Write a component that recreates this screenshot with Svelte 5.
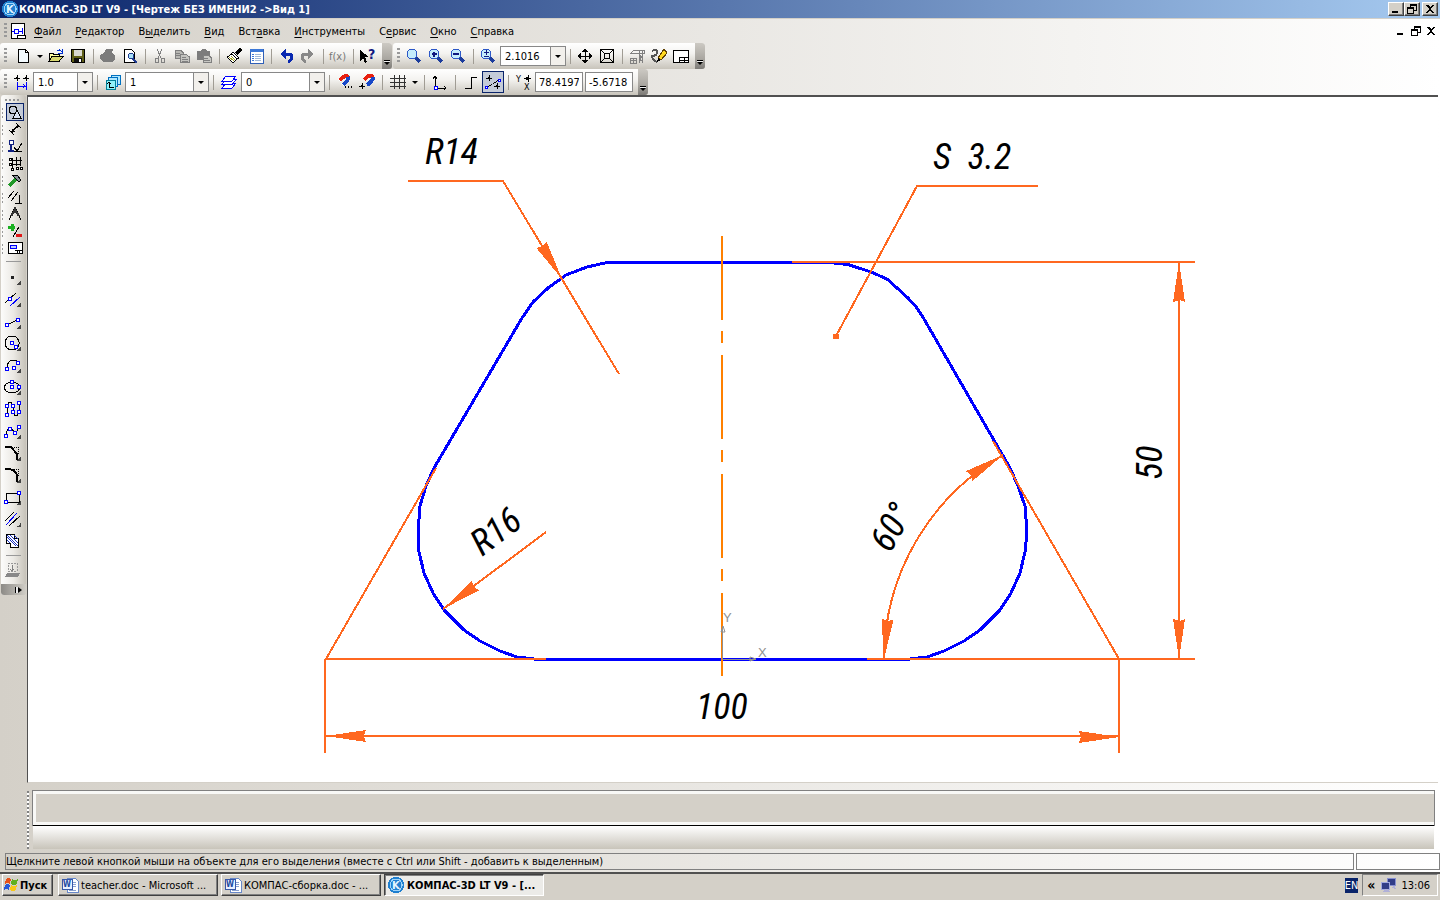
<script>
	// icon = list of shapes: [path, stroke, fill, stroke width] on a 16x16 grid,
	// or { x, y, t, c, s } for a letter inside the icon
	const K = '#000';
	const G = '#808080';
	const B = '#0000ff';
	const N = 'none';
	const lens = [
		['M9 9l5 5', '#1c3c9c', N, 3],
		['M6 1a5 5 0 1 0 .1 0z', '#2c58c8', '#c4ecfc', 1]
	];
	const node = (x, y) => [`M${x - 1.5} ${y - 1.5}h3v3h-3z`, B, '#fff', 1];

	const icons = {
		new: [['M3 1.500h7l3 3v10h-10z', K, '#f4fbff', 1], ['M10 1.500v3h3', K, '#fff', 1]],
		open: [
			['M1 13.500v-8h4l1 1h5v2', K, '#ffffa0', 1],
			['M1 13.500l3-5h11l-4 5z', K, '#d8d870', 1],
			['M9 3c2-2 3-1 5 1M14 1v4h-4', '#0030d0', N, 1]
		],
		save: [
			['M1.500 1.500h13v13h-12l-1-1z', K, '#606018', 1],
			['M4 2h8v6h-8z', N, '#d8d8d0', 0],
			['M4 10h8v4h-8z', N, '#101010', 0],
			['M9 11h2v3h-2z', N, '#fff', 0]
		],
		print: [['M4 5l2-4h7l-1 4 3 2v4l-3 3h-8l-4-3v-4z', N, '#7c7c7c', 0]],
		preview: [
			['M2.500 1.500h7l3 3v10h-10z', K, '#fff', 1],
			['M9 5a3 3 0 1 0 .1 0z', '#203c90', '#a8e0f8', 1],
			['M11 11l4 4', '#203c90', N, 2]
		],
		cut: [
			['M5 1l4 9M10 1l-4 9', G, N, 1],
			['M3 10h3v4h-3zM9 10h3v4h-3z', G, N, 1]
		],
		copy: [
			['M1 2.500h6l2 2v6h-8z', G, '#b8b8b4', 1],
			['M6 6.500h6l3 2v6h-9z', G, '#c4c4c0', 1],
			['M2 5h4M2 7h4M8 9h4M8 11h6M8 13h6', G, N, 1]
		],
		paste: [
			['M1 3h3l2-2h3l2 2h3v9h-13z', N, '#7c7c7c', 0],
			['M7 7.500h6l2 2v5h-8z', G, '#c8c8c4', 1],
			['M8 10h4M8 12h6', G, N, 1]
		],
		brush: [
			['M10 6l5-5', K, N, 3],
			['M7 4l6 6-2 1-6-5z', K, '#fff', 1],
			['M6 6l5 5-4 4-6-6z', K, '#fff', 1],
			['M3 9l5 4M5 8l4 4', '#a0a020', N, 1]
		],
		props: [
			['M2 1h13v14h-13z', '#3060b8', '#fff', 1],
			['M2 1h13v3h-13z', N, '#3c78d8', 0],
			['M4 6h2M4 8h2M4 10h2M4 12h2', '#3c78d8', N, 1],
			['M7 6h6M7 8h6M7 10h6M7 12h6', '#a0b8d8', N, 1]
		],
		undo: [
			['M6 6h4q4 0 4 3t-4 5', '#0828b0', N, 3],
			['M2 6l6-5v10z', N, '#0828b0', 0]
		],
		redo: [
			['M10 6h-4q-4 0-4 3t4 5', '#888', N, 3],
			['M14 6l-6-5v10z', N, '#888', 0]
		],
		fx: [{ x: -1, y: 12, t: 'f(x)', c: '#777', s: 11 }],
		help: [
			['M0 2v11l3-3 2 5 2-1-2-5h4z', N, K, 0],
			{ x: 8, y: 11, t: '?', c: '#101880', s: 14, b: true }
		],
		zoom: lens,
		zoomin: [...lens, ['M6 3.500v5M3.500 6h5', '#101880', N, 2]],
		zoomout: [...lens, ['M3 6h6', '#101880', N, 2]],
		zoomscale: [...lens, ['M6 2v5M3.500 4.500h5M3.500 8.500h5', '#101880', N, 1]],
		pan: [
			['M8 2v12M2 8h12', K, N, 1],
			['M8 0l3 4h-6zM8 16l3-4h-6zM0 8l4-3v6zM16 8l-4-3v6z', N, K, 0]
		],
		fit: [
			['M1.500 1.500h13v13h-13z', K, N, 1],
			['M5.500 5.500h5v5h-5z', K, N, 1],
			['M2 2l3 3M14 2l-3 3M2 14l3-3M14 14l-3-3', K, N, 1]
		],
		redraw: [
			['M1 6l4-4h10v3h-14', G, N, 1],
			['M10 3v12M13 3v12M10 7l3 2-3 2 3 2', G, N, 1],
			['M1 10h6v5h-6zM1 12.500h6M4 10v5', G, N, 1]
		],
		pencil: [
			['M1 3q5-3 5 1t-5 4q0 4 5 6', '#555', N, 2],
			['M7 10l6-9 3 4-6 7z', '#604000', '#ffd820', 1],
			['M6 14l1-4 3 2z', N, K, 0]
		],
		layout: [
			['M0.500 2.500h15v12h-15z', K, '#fff', 1],
			['M6.500 9.500h9v5h-9zM7 12h8M11 10v4', K, N, 1]
		],
		snap: [
			['M4 1v6M1 4h6M13 1v6M10 4h6', K, N, 1],
			['M3 3h2v2h-2zM12 3h2v2h-2z', N, K, 0],
			['M4 8v8M13 8v8', B, N, 1],
			['M5 12h8M10 10l2 2-2 2', B, N, 1]
		],
		view: [
			['M6 1h9v9h-9z', '#0070c0', '#b0e8ff', 1],
			['M3.500 3.500h9v9h-9z', '#0070c0', '#b0e8ff', 1],
			['M1 6h9v9h-9z', '#008098', '#90f0f8', 1],
			['M4 8v5h5M2 10l2-2 2 2', K, N, 1]
		],
		layers: [
			['M1 14l4-5h10l-4 5z', B, '#fff', 1],
			['M1 10.500l4-5h10l-4 5z', B, '#fff', 1],
			['M1 7l4-5h10l-4 5z', B, '#fff', 1]
		],
		magnet: [
			['M2 7l4-4q4-2 5 0', '#e82010', N, 4],
			['M11 3q1 3-5 8', '#1848c8', N, 4],
			['M1 5l3 3M4 9l3 3', '#fff', N, 1],
			['M8 13h1M11 13h1M14 13h1', K, N, 2]
		],
		magnetset: [
			['M5 6l4-4q4-1 5 1', '#e82010', N, 4],
			['M14 3q0 4-6 8', '#1848c8', N, 4],
			['M3 9v6M0 12h6', K, N, 1],
			['M2 11h2v2h-2z', N, K, 0]
		],
		grid: [['M4 1v14M9 1v14M14 1v14M0 4h16M0 8h16M0 12h16', '#333', N, 1]],
		axes: [
			['M3 2v12h11M1 5l2-3 2 3M12 12l2 2-2 2', K, N, 1],
			['M2 12h3v3h-3z', B, '#fff', 1]
		],
		ortho: [['M2 14h6v-11h6', K, N, 1]],
		round: [
			['M1 14l13-8', K, N, 1, '3 1'],
			['M4 1v6M1 4h6M12 9v6M9 12h6', K, N, 1],
			['M3 3h2v2h-2zM11 11h2v2h-2z', N, K, 0],
			['M0 12h2v2h-2zM13 5h2v2h-2z', B, '#fff', 1]
		],
		coords: [
			{ x: 0, y: 8, t: 'Y', c: K, s: 9 },
			{ x: 8, y: 16, t: 'X', c: K, s: 9 },
			['M12 1v7M8 4.500h7', K, N, 1],
			['M10 3h3v3h-3z', N, K, 0]
		],
		geometry: [
			['M6 2a4 4 0 1 0 .1 0z', K, N, 1],
			['M10 6l4 8h-8z', K, '#d8e0f0', 1]
		],
		dims: [
			['M2 9l5 5M9 2l5 5M4 11l8-7', K, N, 1],
			['M4 12l1-4 3 3zM12 4l-4 1 3 3z', N, K, 0]
		],
		marks: [
			['M2 2h4v4h-4z', '#102080', '#fff', 1],
			['M4 6v7M1 13h6', '#102080', N, 2],
			['M7 9l3 4 5-8M7 13h8', K, N, 1]
		],
		edit: [
			['M5 3v11M9 2v9M13 2v9M5 5h10M3 9h11', K, N, 1],
			['M2 3h2v2h-2zM2 8h2v2h-2zM4 13h2v2h-2zM9 12h2v2h-2zM13 12h2v2h-2z', K, '#fff', 1]
		],
		hammer: [
			['M2 14l7-7', '#209828', N, 3],
			['M5 3l5 0 4 5-2 2-4-4z', K, '#889098', 1]
		],
		params: [['M1 9l6-7M4 12l7-9M12 6v8M8 14h7', K, N, 1]],
		measure: [
			['M2 14l5-11h2l5 11', K, N, 1],
			['M8 1v3M4 10l4-6 4 6', '#333', N, 2]
		],
		select: [
			['M5 1v7M1 4.500h7', '#18b020', N, 3],
			['M12 4l-6 10', K, N, 1],
			['M9 12.500h6', '#e01818', N, 3]
		],
		report: [
			['M1 2.500h14v11h-14z', K, '#fff', 1],
			['M3 5h6v3h-6z', B, '#c0d0ff', 1],
			['M8 10h7M10 10v3M12 10v3', K, N, 1]
		],
		point: [['M7 7h3v3h-3z', N, '#222', 0]],
		parallel: [['M1 12l11-10', K, N, 1], ['M6 15l10-9', B, N, 1], node(6, 8)],
		segment: [['M3 12l10-5', K, N, 1], node(3, 12), node(14, 7)],
		circle: [['M8 1a7 7 0 1 0 .1 0z', K, N, 1], node(8, 8), node(12, 12)],
		arc: [['M3 12q0-9 6-9 5 0 5 4', K, N, 1], node(3, 12), node(10, 11), node(14, 6)],
		ellipse: [['M8 3c10 0 10 11 0 11s-10-11 0-11z', K, N, 1], node(8, 3), node(8, 8), node(15, 8)],
		nurbs: [
			['M3 14v-9q3-8 6 0v6q3 8 6 0v-9', K, N, 1],
			node(3, 14), node(3, 5), node(9, 5), node(9, 11), node(15, 11), node(15, 2)
		],
		spline: [['M2 13q1-10 5-7t5 3 3-6', K, N, 1], node(2, 13), node(6, 6), node(11, 10), node(15, 4)],
		chamfer: [['M1 2h6l6 7v6', K, N, 2], ['M8 2h6v7', K, N, 1, '1 1']],
		fillet: [['M1 2h4q8 1 8 8v5', K, N, 2], ['M8 2h6v7', K, N, 1, '1 1']],
		rect: [['M2 4h13v9h-13z', K, N, 1], node(2, 13), node(15, 4)],
		aux: [['M1 10l9-9M5 15l11-10', K, N, 1], ['M2 14l11-12', B, N, 1]],
		hatch: [
			['M2.500 1.500h8v4h4v9h-8v-4h-4z', K, '#fff', 1],
			['M3 4l9 9M3 2l11 11M6 2l8 8M10 2l4 4M3 7l3 3', '#1830c0', N, 1]
		],
		project: [
			['M4 1h9v8h-9z', '#999', N, 1, '2 1'],
			['M8 3v6M6 7l2 2 2-2', G, N, 1],
			['M3 11h13l-2 4h-13z', N, '#888', 0]
		],
		kompas: [
			['M8 0a8 8 0 1 0 .1 0z', N, '#2080d0', 0],
			['M8 2a6 6 0 1 0 .1 0z', '#9fd4fa', N, 1],
			{ x: 4, y: 12, t: 'K', c: '#e4f6ff', s: 11, b: true }
		],
		doc: [
			['M1.500 0.500h13v15h-13z', K, '#fff', 1],
			['M4 6h4v4h-4zM8 8h5M12 5v6M4 8h-2', B, N, 1],
			['M7 12h8v3h-8z', K, '#fff', 1]
		],
		word: [
			['M5 1h8l3 3v11h-11z', '#6888c8', '#fff', 1],
			['M11 5h3M11 7h3M11 9h3M7 13h7', '#88a0d0', N, 1],
			['M0 2h10v10h-10z', '#3858a8', '#e8f0ff', 1],
			{ x: 1, y: 10, t: 'W', c: '#2048a0', s: 8, b: true }
		],
		flag: [
			['M3 2q3-2 5 0l-1 5q-3-2-5 0z', N, '#e85018', 0],
			['M9 2q3 2 6 0l-1 5q-3 2-6 0z', N, '#60b020', 0],
			['M2 8q3-2 5 0l-1 5q-3-2-5 0z', N, '#2858d8', 0],
			['M8 8q3 2 6 0l-1 5q-3 2-6 0z', N, '#f8c818', 0]
		],
		network: [
			['M7 1h8v7h-8z', '#8890d0', '#303c88', 1],
			['M1 5h8v7h-8z', '#a0a8e0', '#303c88', 1],
			['M3 15l2-3h3l2 3zM11 11l2-2h2l1 3z', N, '#b0b0d8', 0]
		]
	};

	const menu = [
		['', 'Ф', 'айл'], ['', 'Р', 'едактор'], ['В', 'ы', 'делить'], ['', 'В', 'ид'], ['Вст', 'а', 'вка'],
		['', 'И', 'нструменты'], ['С', 'е', 'рвис'], ['', 'О', 'кно'], ['', 'С', 'правка']
	];

	const standardBar = [
		'new', 'drop', 'open', 'save', '|', 'print', 'preview', '|', 'cut', 'copy', 'paste', '|',
		'brush', 'props', '|', 'undo', 'redo', '|', 'fx', '|', 'help'
	];
	const panels = ['geometry', 'dims', 'marks', 'edit', 'hammer', 'params', 'measure', 'select', 'report'];
	const tools = [
		'point', 'parallel', 'segment', 'circle', 'arc', 'ellipse', 'nurbs', 'spline', 'chamfer',
		'fillet', 'rect', 'aux', 'hatch'
	];

	// dimension arrow heads: [tip x, tip y, rotation], the head points to the left
	const arrows = [
		[326, 736, 0], [1119, 737, 180], [1179, 262, 90], [1179, 659, 270],
		[562, 279, 239], [443, 609, 324], [884, 659, 275], [1003, 455, 148]
	];

	let scale = $state('2.1016');
	let step = $state('1.0');
	let viewNo = $state('1');
	let layer = $state('0');
	let x = $state('78.4197');
	let y = $state('-5.6718');
	let panel = $state('geometry');
</script>

{#snippet icon(name)}
	<svg class="icon" viewBox="0 0 16 16" aria-hidden="true">
		{#each icons[name] as part}
			{#if part.t}
				<text x={part.x} y={part.y} fill={part.c} font-size={part.s} font-weight={part.b ? 700 : 400}>{part.t}</text>
			{:else}
				<path d={part[0]} stroke={part[1]} fill={part[2]} stroke-width={part[3]} stroke-dasharray={part[4]} />
			{/if}
		{/each}
	</svg>
{/snippet}

{#snippet bar(items)}
	{#each items as item}
		{#if item === '|'}
			<span class="sep"></span>
		{:else if item === 'drop'}
			<button class="drop" aria-label="more"></button>
		{:else}
			<button class="tool" class:active={item === 'round'} aria-label={item}>{@render icon(item)}</button>
		{/if}
	{/each}
{/snippet}

{#snippet windowIcon(kind)}
	<svg class="glyph" viewBox="0 0 12 10" aria-hidden="true">
		{#if kind === 'min'}
			<path d="M2 7h6v2h-6z" />
		{:else if kind === 'restore'}
			<path d="M4 0h7v7h-3v-1h2v-4h-5v1h-1zM1 3h7v7h-7zM2 5v4h5v-4z" fill-rule="evenodd" />
		{:else}
			<path d="M2 1h2l2 2 2-2h2l-3 4 3 4h-2l-2-3-2 3h-2l3-4z" />
		{/if}
	</svg>
{/snippet}

<div class="window">
	<header class="titlebar">
		{@render icon('kompas')}
		<h1>КОМПАС-3D LT V9 - [Чертеж БЕЗ ИМЕНИ2 -&gt;Вид 1]</h1>
		<button class="caption" aria-label="Свернуть">{@render windowIcon('min')}</button>
		<button class="caption" aria-label="Восстановить">{@render windowIcon('restore')}</button>
		<button class="caption close" aria-label="Закрыть">{@render windowIcon('close')}</button>
	</header>

	<nav class="menubar">
		<span class="grip"></span>
		{@render icon('doc')}
		<div class="menu">
			{#each menu as [before, key, after]}
				<button>{before}<u>{key}</u>{after}</button>
			{/each}
		</div>
		<div class="mdi">
			<button aria-label="Свернуть документ">{@render windowIcon('min')}</button>
			<button aria-label="Восстановить документ">{@render windowIcon('restore')}</button>
			<button aria-label="Закрыть документ">{@render windowIcon('close')}</button>
		</div>
	</nav>

	<div class="toolbars">
		<div class="toolbar wide">
			<span class="grip"></span>
			{@render bar(standardBar)}
			<button class="overflow" aria-label="Параметры"></button>
		</div>
		<div class="toolbar">
			<span class="grip"></span>
			{@render bar(['zoom', 'zoomin', 'zoomout', '|', 'zoomscale'])}
			<label class="combo scale">
				<select bind:value={scale} aria-label="Масштаб"><option>2.1016</option></select>
			</label>
			{@render bar(['|', 'pan', 'fit', '|', 'redraw', 'pencil', 'layout'])}
			<button class="overflow" aria-label="Параметры"></button>
		</div>
	</div>

	<div class="toolbars">
		<div class="toolbar state">
			<span class="grip"></span>
			{@render bar(['snap'])}
			<label class="combo step">
				<select bind:value={step} aria-label="Шаг курсора"><option>1.0</option></select>
			</label>
			{@render bar(['|', 'view'])}
			<label class="combo">
				<select bind:value={viewNo} aria-label="Вид"><option>1</option></select>
			</label>
			{@render bar(['|', 'layers'])}
			<label class="combo">
				<select bind:value={layer} aria-label="Слой"><option>0</option></select>
			</label>
			{@render bar(['|', 'magnet', 'magnetset', '|', 'grid', 'drop', '|', 'axes', '|', 'ortho', 'round', '|', 'coords'])}
			<input class="coord" bind:value={x} aria-label="X" />
			<input class="coord" bind:value={y} aria-label="Y" />
			<button class="overflow" aria-label="Параметры"></button>
		</div>
	</div>

	<main>
		<aside>
			<span class="hgrip"></span>
			{#each panels as name}
				<div class="panelrow">
					<button class="tool small" class:active={panel === name} aria-label={name} onclick={() => (panel = name)}>
						{@render icon(name)}
					</button>
				</div>
			{/each}
			<span class="hsep"></span>
			{#each tools as name}
				<button class="tool side" class:more={name !== 'nurbs' && name !== 'hatch'} aria-label={name}>
					{@render icon(name)}
				</button>
			{/each}
			<span class="hsep low"></span>
			<button class="tool side" aria-label="project">{@render icon('project')}</button>
			<button class="expand" aria-label="Развернуть"></button>
		</aside>

		<div class="canvas">
			<svg viewBox="28 97 1410 685">
				<!-- contour: the arcs are drawn as short chords -->
				<path
					class="contour"
					d="M607 262.500H830L848 264.500 871 272 887 279 897 288 908 298 917 308 924 319
					L1010 468 1018 486 1025 506 1027 532 1025 552 1020 573 1011 593 1000 610 980 630 964 641 944 651 927 657 906 659.500
					H538L517 657 500 651 480 641 464 630 444 610 433 593 424 573 419 552 418 532 420 506 426 486 434 468
					L522 318 533 302 548 288 566 275 587 267z"
				/>
				<path class="axis" d="M722 236V676" />
				<g class="thin">
					<path d="M408 181H503L619 374" />
					<path d="M1038 186H917L836 336" />
					<path d="M792 262H1195M1179 262V659M867 659H1195" />
					<path d="M546 659H326L436 468M325 659V753M326 736H1119M1119 753V659L993 441" />
					<path d="M546 532L443 609" />
					<path d="M884 659A236 236 0 0 1 1003 455" />
				</g>
				<path class="head" d="M833 334h6v5h-6z" />
				{#each arrows as [ax, ay, turn]}
					<path class="head" d="M0 0L40-6 38 0 40 6z" transform="translate({ax} {ay}) rotate({turn})" />
				{/each}
				<g class="origin">
					<path d="M722.500 659V626M722 659.500H756M721 632l2-6 2 6zM750 657l6 2-6 2z" />
					<text x="723" y="622">Y</text>
					<text x="758" y="657">X</text>
				</g>
				<g class="label">
					<text x="425" y="164">R14</text>
					<text x="933" y="169">S&nbsp; 3.2</text>
					<text x="696" y="719">100</text>
					<text transform="translate(482 557) rotate(-37)">R16</text>
					<text transform="translate(890 554) rotate(-60)">60°</text>
					<text transform="translate(1162 480) rotate(-90)">50</text>
				</g>
			</svg>
		</div>
	</main>

	<section class="props">
		<span class="vgrip"></span>
		<div class="sheet">
			<div class="tabpage"></div>
			<div class="tabs"></div>
		</div>
	</section>

	<footer class="status">
		<p>Щелкните левой кнопкой мыши на объекте для его выделения (вместе с Ctrl или Shift - добавить к выделенным)</p>
		<span></span>
	</footer>

	<div class="taskbar">
		<button class="start">{@render icon('flag')}Пуск</button>
		<button class="task">{@render icon('word')}<span>teacher.doc - Microsoft ...</span></button>
		<button class="task">{@render icon('word')}<span>КОМПАС-сборка.doc - ...</span></button>
		<button class="task pressed">{@render icon('kompas')}<span>КОМПАС-3D LT V9 - [...</span></button>
		<span class="lang">EN</span>
		<div class="tray">
			<b>«</b>
			{@render icon('network')}
			<time>13:06</time>
		</div>
	</div>
</div>

<style>
	:global(body) {
		margin: 0;
		background: #d4d0c8;
	}
	.window {
		display: flex;
		flex-direction: column;
		min-height: 100vh;
		background: linear-gradient(90deg, #d4d0c8, #fff);
		color: #000;
		font: 11px/13px Tahoma, 'DejaVu Sans Condensed', sans-serif;
	}
	button,
	input,
	select {
		box-sizing: border-box;
		margin: 0;
		padding: 0;
		border: 0;
		background: none;
		color: inherit;
		font: inherit;
	}
	.icon {
		flex: none;
		width: 16px;
		height: 16px;
		overflow: visible;
		shape-rendering: crispEdges;
	}
	.glyph {
		display: block;
		width: 12px;
		height: 10px;
		shape-rendering: crispEdges;
	}

	/* title and menu */
	.titlebar {
		display: flex;
		align-items: center;
		height: 18px;
		padding: 0 2px;
		background: linear-gradient(90deg, #0a246a, #a6caf0);
		border-bottom: 1px solid #d4d0c8;
	}
	h1 {
		flex: 1;
		margin: 0 0 0 1px;
		color: #fff;
		font-size: 11px;
		font-weight: 700;
	}
	.caption {
		display: flex;
		align-items: center;
		justify-content: center;
		width: 16px;
		height: 14px;
		background: #d4d0c8;
		border: 1px solid;
		border-color: #fff #404040 #404040 #fff;
		box-shadow: inset -1px -1px #808080;
	}
	.close {
		margin-left: 2px;
	}
	.menubar {
		display: flex;
		align-items: center;
		height: 24px;
	}
	.menubar .icon {
		margin-left: 1px;
	}
	.menu {
		display: flex;
		flex: 1;
		gap: 14px;
		margin-left: 8px;
	}
	u {
		text-underline-offset: 2px;
	}
	.mdi {
		display: flex;
		gap: 3px;
		padding-right: 3px;
	}

	/* toolbars */
	.toolbars {
		display: flex;
		gap: 1px;
		height: 26px;
	}
	.toolbar {
		display: flex;
		align-items: center;
		background: linear-gradient(#fff, #f4f3f0 40%, #c8c4bb);
		border-radius: 3px;
	}
	.grip {
		flex: none;
		align-self: center;
		width: 3px;
		height: 16px;
		margin: 0 3px 0 4px;
		background: repeating-linear-gradient(#999 0 2px, transparent 2px 4px);
	}
	.menubar .grip {
		margin-right: 2px;
	}
	.toolbar.wide .grip {
		margin-right: 5px;
	}
	.sep {
		width: 8px;
		height: 15px;
		background: linear-gradient(#a09c94, #a09c94) 4px 0 / 1px 100% no-repeat;
	}
	.state .sep {
		width: 9px;
	}
	.tool {
		display: flex;
		flex: none;
		align-items: center;
		justify-content: center;
		width: 22px;
		height: 22px;
	}
	.active {
		background: #c4cbd8;
		border: 1px solid #0a246a;
	}
	.drop {
		display: flex;
		justify-content: center;
		width: 11px;
	}
	.drop::before,
	.combo::after,
	.overflow::after {
		content: '';
		border: 3px solid transparent;
		border-top-color: #000;
		border-bottom: 0;
	}
	.overflow {
		display: flex;
		align-items: flex-end;
		justify-content: center;
		width: 10px;
		height: 26px;
		margin-left: 3px;
		padding-bottom: 4px;
		background: linear-gradient(#ccc9c3, #aaa7a1 60%, #7c7a76);
		border-radius: 0 3px 3px 0;
	}
	.overflow::after {
		box-shadow: 0 -1px #f4f4f4, 0 -2px #000;
	}
	.combo {
		display: flex;
		position: relative;
		width: 84px;
		height: 20px;
		margin-left: 1px;
	}
	.scale {
		width: 66px;
	}
	.step {
		width: 60px;
	}
	.combo::after {
		position: absolute;
		top: 9px;
		right: 5px;
		pointer-events: none;
	}
	select {
		width: 100%;
		padding: 0 4px;
		appearance: none;
		background: linear-gradient(90deg, #888, #888 1px, #f2f0ec 1px) right / 15px 100% no-repeat #fff;
		border: 1px solid #888;
		border-radius: 0;
	}
	.coord {
		width: 48px;
		height: 20px;
		margin-right: 2px;
		padding: 0 3px;
		background: #fff;
		border: 1px solid #888;
	}

	/* work area */
	main {
		display: flex;
		flex: 1;
	}
	aside {
		display: flex;
		flex-direction: column;
		flex: none;
		width: 25px;
		align-self: flex-start;
		margin: 0 1px;
		background: linear-gradient(90deg, #fcfcfb, #ebe9e4 50%, #c6c2b9);
		border-radius: 3px;
	}
	.hgrip {
		height: 2px;
		margin: 4px 5px 3px 4px;
		background: repeating-linear-gradient(90deg, #999 0 2px, transparent 2px 4px);
	}
	.panelrow {
		display: flex;
		height: 17px;
		padding-left: 6px;
		background: repeating-linear-gradient(#999 0 2px, transparent 2px 4px) 1px 4px / 1px 10px no-repeat;
	}
	.small {
		width: 16px;
		height: 16px;
	}
	.small.active {
		border: 0;
		outline: 1px solid #0a246a;
	}
	.hsep {
		height: 1px;
		margin: 4px 5px;
		background: #999;
	}
	.low {
		margin: 3px 5px;
	}
	.side {
		width: 22px;
	}
	.more {
		background: linear-gradient(135deg, transparent 50%, #444 50%) right 2px bottom 3px / 4px 4px no-repeat;
	}
	.expand {
		display: flex;
		align-items: center;
		justify-content: flex-end;
		height: 11px;
		margin-top: 3px;
		padding-right: 4px;
		background: linear-gradient(90deg, #8c8a86, #d0cdc6);
		border-radius: 0 0 3px 3px;
	}
	.expand::after {
		content: '';
		border: 3px solid transparent;
		border-right: 0;
		border-left: 4px solid #000;
		box-shadow: -2px 0 #eee, -3px 0 #000;
	}
	.canvas {
		flex: 1;
		margin-right: 2px;
		background: #fff;
		border: 1px solid #d4d0c8;
		border-top: 2px solid #505050;
		border-left: 1px solid #505050;
		border-right: 0;
	}
	.canvas svg {
		display: block;
		width: 100%;
		height: 100%;
	}
	.contour {
		fill: none;
		stroke: #0000ff;
		stroke-width: 3;
		shape-rendering: crispEdges;
	}
	.thin path {
		fill: none;
		stroke: #ff6820;
		stroke-width: 2;
		shape-rendering: crispEdges;
	}
	.axis {
		stroke: #ff8000;
		stroke-width: 2;
		stroke-dasharray: 84 11 12 12;
	}
	.head {
		fill: #ff6820;
		shape-rendering: crispEdges;
	}
	.origin path {
		fill: none;
		stroke: #909090;
	}
	.origin text {
		fill: #909090;
		font-size: 13px;
		font-family: 'Liberation Sans', sans-serif;
	}
	.label text {
		font: italic 400 36px 'Roboto Condensed', Roboto, 'Liberation Sans', sans-serif;
	}

	/* property panel and status line */
	.props {
		display: flex;
		gap: 4px;
		padding: 8px 6px 2px 27px;
	}
	.vgrip {
		width: 2px;
		background: repeating-linear-gradient(#808080 0 2px, #fff 2px 4px);
	}
	.sheet {
		flex: 1;
	}
	.tabpage {
		height: 28px;
		background: #d4d0c8;
		border: 3px solid #f8f8f6;
		outline: 1px solid #808080;
		border-right-width: 0;
		box-shadow: 0 1px #000;
	}
	.tabs {
		position: relative;
		height: 23px;
		background: linear-gradient(#fff, #c8c4ba);
		border-top: 1px solid #000;
	}
	.status {
		display: flex;
		gap: 2px;
		padding: 2px 0 2px 5px;
	}
	.status p,
	.status span {
		height: 15px;
		margin: 0;
		border: 1px solid #808080;
		line-height: 15px;
	}
	.status p {
		flex: 1;
	}
	.status span {
		width: 82px;
	}

	/* taskbar */
	.taskbar {
		display: flex;
		align-items: center;
		height: 22px;
		padding: 0 2px 5px;
		background: #d4d0c8;
		border-top: 2px solid #505050;
	}
	.start,
	.task {
		display: flex;
		align-items: center;
		gap: 3px;
		height: 22px;
		border: 1px solid;
		border-color: #fff #404040 #404040 #fff;
		box-shadow: inset -1px -1px #808080;
	}
	.start {
		gap: 1px;
		width: 51px;
		margin-right: 5px;
		font-weight: 700;
	}
	.task {
		width: 160px;
		margin-right: 3px;
		padding: 0 3px;
	}
	.task span {
		overflow: hidden;
		white-space: nowrap;
	}
	.pressed {
		background: #ecebe8;
		border-color: #404040 #fff #fff #404040;
		box-shadow: inset 1px 1px #808080;
		font-weight: 700;
	}
	.lang {
		margin-left: auto;
		color: #fff;
		background: #0a246a;
		line-height: 15px;
	}
	.tray {
		display: flex;
		align-items: center;
		gap: 5px;
		height: 20px;
		margin-left: 4px;
		padding: 0 7px 0 4px;
		border: 1px solid;
		border-color: #808080 #fff #fff #808080;
	}
	.tray b {
		font-size: 14px;
	}
</style>
